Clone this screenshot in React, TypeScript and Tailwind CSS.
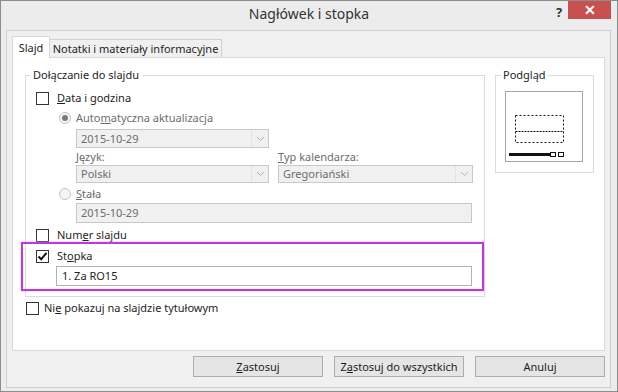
import React from 'react';

const Checkbox = ({ checked = false }: { checked?: boolean }) => (
  <span className="flex h-[13px] w-[13px] shrink-0 items-center justify-center border border-[#333333] bg-white">
    {checked && (
      <svg width="11" height="11" viewBox="0 0 11 11">
        <path d="M1.5 5.5 L4.2 8.3 L9.5 1.8" fill="none" stroke="#111" strokeWidth="2" />
      </svg>
    )}
  </span>
);

const Radio = ({ checked = false }: { checked?: boolean }) => (
  <span className="flex h-[12px] w-[12px] shrink-0 items-center justify-center rounded-full border border-[#c4c4c4] bg-[#f4f4f4]">
    {checked && <span className="h-[6px] w-[6px] rounded-full bg-[#7a7a7a]" />}
  </span>
);

const Chevron = () => (
  <svg width="9" height="6" viewBox="0 0 9 6">
    <path d="M1 1 L4.5 4.5 L8 1" fill="none" stroke="#b0b0b0" strokeWidth="1" />
  </svg>
);

const DisabledSelect = ({ value, width, height }: { value: string; width: string; height: string }) => (
  <div className={`flex ${width} ${height} items-center border border-[#c8c8c8] bg-[#f0f0f0]`}>
    <span className="flex-1 pl-[4px] text-[#6d6d6d]">{value}</span>
    <span className="flex h-full w-[17px] items-center justify-center border-l border-[#e4e4e4]">
      <Chevron />
    </span>
  </div>
);

const DialogButton = ({ children }: { children: React.ReactNode }) => (
  <button className="flex h-[21px] w-[130px] items-center justify-center whitespace-nowrap border border-[#adadad] bg-[#e5e5e5] text-[#1e1e1e]">
    {children}
  </button>
);

const SlidePreview = () => (
  <svg width="78" height="71" viewBox="0 0 78 71">
    <rect x="0.5" y="0.5" width="77" height="70" fill="#fff" stroke="#a6a6a6" />
    <rect x="10.5" y="24.5" width="48" height="27" fill="none" stroke="#111" strokeDasharray="2 2" />
    <line x1="10.5" y1="40.5" x2="58.5" y2="40.5" stroke="#111" strokeDasharray="2 1" />
    <rect x="4" y="62" width="41" height="3" fill="#111" />
    <rect x="45.5" y="61.5" width="5" height="4" fill="#fff" stroke="#111" />
    <rect x="53.5" y="61.5" width="5" height="4" fill="#fff" stroke="#111" />
  </svg>
);

export default function App() {
  return (
    <div className="flex h-[392px] w-[618px] flex-col border border-[#8c8c8c] bg-[#ececec] font-['Noto_Sans',sans-serif] text-[11px] leading-[16px] text-[#1e1e1e]">
      {/* Title bar */}
      <div className="flex h-[29px] shrink-0">
        <div className="w-[67px]" />
        <div className="flex-1 pt-[3px] text-center text-[14px] leading-[20px] text-[#333333]">Nagłówek i stopka</div>
        <div className="flex w-[67px] items-start">
          <span className="w-[18px] pt-[3px] text-center text-[13px] font-bold text-[#333333]">?</span>
          <span className="flex h-[18px] w-[43px] items-center justify-center bg-[#c75050] text-[14px] font-bold leading-none text-white">
            ✕
          </span>
        </div>
      </div>

      {/* Client area */}
      <div className="mb-[3px] ml-[5px] mr-[6px] flex flex-1 flex-col border border-[#cfcfcf] bg-[#f0f0f0] px-[5px] pt-[5px]">
        {/* Tabs */}
        <div className="flex h-[21px] items-end">
          <div className="relative z-10 -mb-px flex h-[22px] w-[38px] items-center justify-center border border-b-0 border-[#d9d9d9] bg-white">
            Slajd
          </div>
          <div className="flex h-[18px] w-[172px] items-center justify-center whitespace-nowrap border border-b-0 border-l-0 border-[#d0d0d0] bg-[#f0f0f0]">
            Notatki i materiały informacyjne
          </div>
        </div>

        {/* Tab panel */}
        <div className="flex h-[294px] flex-col border border-[#d9d9d9] bg-white pl-[12px] pt-[9px]">
          <div className="flex">
            <fieldset className="h-[230px] w-[458px] border border-[#dcdcdc] pb-[4px]">
              <legend className="ml-[4px] px-[3px]">Dołączanie do slajdu</legend>

              <div className="mt-[7px] flex h-[16px] items-center pl-[10px]">
                <Checkbox />
                <span className="ml-[8px]">
                  <span className="underline">D</span>ata i godzina
                </span>
              </div>

              <div className="mt-[4px] flex h-[16px] items-center pl-[33px] text-[#6d6d6d]">
                <Radio checked />
                <span className="ml-[5px]">
                  Auto<span className="underline">m</span>atyczna aktualizacja
                </span>
              </div>

              <div className="mt-[3px] pl-[50px]">
                <DisabledSelect value="2015-10-29" width="w-[193px]" height="h-[19px]" />
              </div>

              <div className="mt-[1px] flex h-[16px] pl-[50px] text-[#6d6d6d]">
                <span className="w-[202px]">
                  <span className="underline">J</span>ęzyk:
                </span>
                <span>
                  <span className="underline">T</span>yp kalendarza:
                </span>
              </div>

              <div className="flex gap-[9px] pl-[50px]">
                <DisabledSelect value="Polski" width="w-[193px]" height="h-[18px]" />
                <DisabledSelect value="Gregoriański" width="w-[195px]" height="h-[18px]" />
              </div>

              <div className="mt-[3px] flex h-[16px] items-center pl-[33px] text-[#6d6d6d]">
                <Radio />
                <span className="ml-[5px]">
                  <span className="underline">S</span>tała
                </span>
              </div>

              <div className="mt-[1px] pl-[50px]">
                <div className="flex h-[20px] w-[396px] items-center border border-[#c8c8c8] bg-[#f0f0f0] pl-[4px] text-[#6d6d6d]">
                  2015-10-29
                </div>
              </div>

              <div className="mt-[4px] flex h-[16px] items-center pl-[10px]">
                <Checkbox />
                <span className="ml-[8px]">
                  Num<span className="underline">e</span>r slajdu
                </span>
              </div>

              {/* Highlight around footer option */}
              <div className="relative z-10 -ml-[5px] -mt-[1px] w-[463px] border-2 border-[#bd38df] pb-[3px] pt-[4px] shadow-[0_0_2px_#e6a8f5]">
                <div className="flex h-[16px] items-center pl-[13px]">
                  <Checkbox checked />
                  <span className="ml-[8px]">
                    St<span className="underline">o</span>pka
                  </span>
                </div>
                <div className="mt-[2px] pl-[33px]">
                  <div className="flex h-[20px] w-[416px] items-center border border-[#b4b4b4] bg-white pl-[5px]">
                    1. Za RO15
                  </div>
                </div>
              </div>
            </fieldset>

            <fieldset className="ml-[10px] h-[106px] w-[99px] border border-[#dcdcdc]">
              <legend className="ml-[5px] px-[2px]">Podgląd</legend>
              <div className="ml-[9px] mt-[8px] flex">
                <SlidePreview />
              </div>
            </fieldset>
          </div>

          <div className="mt-[3px] flex h-[16px] items-center pl-[1px]">
            <Checkbox />
            <span className="ml-[5px]">
              Ni<span className="underline">e</span> pokazuj na slajdzie tytułowym
            </span>
          </div>
        </div>

        {/* Buttons */}
        <div className="mt-[5px] flex justify-end gap-[11px]">
          <DialogButton>
            <span className="underline">Z</span>astosuj
          </DialogButton>
          <DialogButton>
            Z<span className="underline">a</span>stosuj do wszystkich
          </DialogButton>
          <DialogButton>Anuluj</DialogButton>
        </div>
      </div>
    </div>
  );
}
